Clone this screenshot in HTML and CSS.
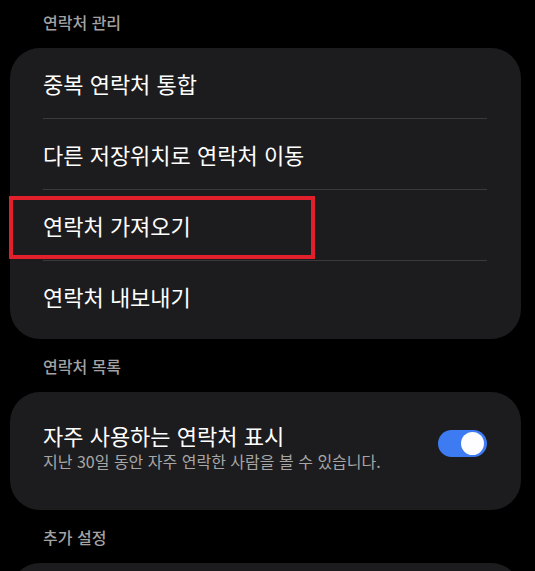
FILE: index.html
```html
<!DOCTYPE html>
<html lang="ko">
<head>
    <meta charset="UTF-8">
    <meta name="viewport" content="width=device-width, initial-scale=1.0">
    <title>연락처 설정</title>
    <link rel="stylesheet" href="styles.css">
</head>
<body>
    <div class="page">
        <div class="section-title">연락처 관리</div>
        <div class="card">
            <div class="row">중복 연락처 통합</div>
            <div class="row">다른 저장위치로 연락처 이동</div>
            <div class="row highlighted">
                연락처 가져오기
                <span class="mark"></span>
            </div>
            <div class="row last">연락처 내보내기</div>
        </div>

        <div class="section-title">연락처 목록</div>
        <div class="card">
            <div class="switch-row">
                <div class="switch-text">
                    <div class="switch-title">자주 사용하는 연락처 표시</div>
                    <div class="switch-sub">지난 30일 동안 자주 연락한 사람을 볼 수 있습니다.</div>
                </div>
                <div class="toggle on"><span class="knob"></span></div>
            </div>
        </div>

        <div class="section-title">추가 설정</div>
        <div class="card tall"></div>
    </div>
</body>
</html>
```

FILE: styles.css
```css
/* Basic styling */
body {
    margin: 0;
    padding: 0;
    background-color: #000;
    font-family: "Noto Sans CJK KR", "Noto Sans", sans-serif;
    color: #fff;
    overflow: hidden;
}

.page {
    margin-top: -5px;
    padding-left: 10px;
    width: 511px;
}

.section-title {
    height: 53px;
    display: flex;
    align-items: center;
    padding-left: 33px;
    font-size: 16px;
    font-weight: 500;
    color: #a3a3a3;
}

.card {
    background-color: #1c1c1e;
    border-radius: 30px;
    padding: 0 34px 8px 33px;
}

.row {
    height: 70px;
    display: flex;
    align-items: center;
    font-size: 22px;
    border-bottom: 1px solid #3a3a3c;
    position: relative;
}

.row.last {
    border-bottom: none;
}

/* red annotation box drawn over the row */
.mark {
    position: absolute;
    left: -34px;
    top: 6px;
    width: 306px;
    height: 63px;
    box-sizing: border-box;
    border: 4px solid #e2202b;
}

.switch-row {
    height: 110px;
    display: flex;
    align-items: center;
    justify-content: space-between;
}

.switch-title {
    font-size: 22px;
    line-height: 29px;
}

.switch-sub {
    font-size: 16px;
    line-height: 23px;
    color: #a6a6a6;
}

.toggle {
    width: 49px;
    height: 27px;
    border-radius: 14px;
    background-color: #3d7bf2;
    position: relative;
    margin-top: -8px;
}

.toggle .knob {
    position: absolute;
    right: 3px;
    top: 2px;
    width: 23px;
    height: 23px;
    border-radius: 50%;
    background-color: #fdfdff;
}

.card.tall {
    height: 80px;
}
```
